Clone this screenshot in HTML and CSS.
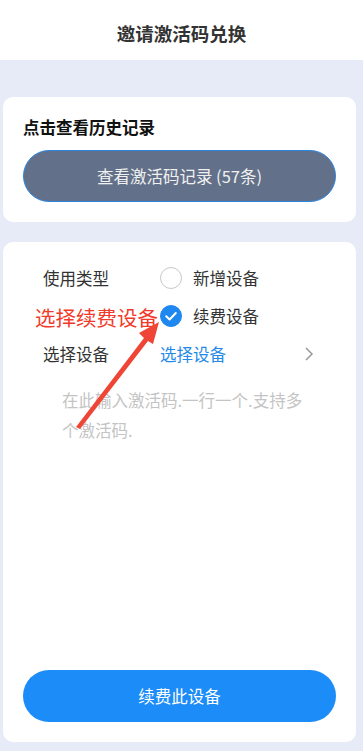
FILE: index.html
```html
<!DOCTYPE html>
<html lang="zh-CN">
<head>
  <meta charset="UTF-8">
  <meta name="viewport" content="width=device-width, initial-scale=1.0">
  <title>邀请激活码兑换</title>
  <link rel="stylesheet" href="styles.css">
</head>
<body>
  <header class="top-bar">邀请激活码兑换</header>

  <main class="page">
    <section class="card history">
      <div class="card-title">点击查看历史记录</div>
      <button class="btn btn-gray">查看激活码记录 (57条)</button>
    </section>

    <section class="card redeem">
      <div class="form">
        <div class="row">
          <div class="label">使用类型</div>
          <label class="radio">
            <span class="dot"></span>
            <span>新增设备</span>
          </label>
        </div>
        <div class="row">
          <div class="label"></div>
          <label class="radio checked">
            <span class="dot">
              <svg viewBox="0 0 22 22" width="22" height="22"><path d="M6.2 11.3 L9.6 14.5 L15.8 8" fill="none" stroke="#fff" stroke-width="2" stroke-linecap="round" stroke-linejoin="round"/></svg>
            </span>
            <span>续费设备</span>
          </label>
        </div>
        <div class="row">
          <div class="label">选择设备</div>
          <div class="link">选择设备</div>
          <svg class="chevron" viewBox="0 0 10 16" width="10" height="16"><path d="M2 2 L8 8 L2 14" fill="none" stroke="#9a9a9a" stroke-width="1.5"/></svg>
        </div>
      </div>

      <textarea class="codes" placeholder="在此输入激活码.一行一个.支持多个激活码."></textarea>

      <button class="btn btn-blue">续费此设备</button>

      <!-- 标注 -->
      <div class="note-text">选择续费设备</div>
      <svg class="note-arrow" viewBox="0 0 363 751" width="363" height="751">
        <polygon points="76,427 144,338 139,333 159,322 153,344 148,341 80,429" fill="#ef4536"/>
      </svg>
    </section>
  </main>
</body>
</html>
```

FILE: styles.css
```css
* {
  box-sizing: border-box;
}
body {
  margin: 0;
  font-family: "Noto Sans CJK SC", "Noto Sans", sans-serif;
  background-color: #e6ebf7;
  color: #333;
}
.top-bar {
  height: 60px;
  background-color: #fff;
  display: flex;
  align-items: center;
  justify-content: center;
  font-size: 18.5px;
  font-weight: 600;
  color: #333;
  padding-top: 6px;
}
.page {
  padding: 37px 7px 9px 3px;
  display: flex;
  flex-direction: column;
  gap: 20px;
}
.card {
  background-color: #fff;
  border-radius: 10px;
  padding: 19px 20px 20px;
}
.card-title {
  font-size: 16.5px;
  font-weight: bold;
  color: #111;
  line-height: 22px;
  margin-bottom: 12px;
}
.btn {
  display: block;
  width: 100%;
  height: 52px;
  border-radius: 26px;
  font-family: inherit;
  font-size: 16.5px;
  color: #f0f0f0;
  cursor: pointer;
}
.btn-gray {
  background-color: #637089;
  border: 1px solid #2b86e0;
}
.btn-blue {
  background-color: #1b8cf8;
  border: none;
  color: #fff;
}
.redeem {
  height: 500px;
  display: flex;
  flex-direction: column;
  padding-top: 17px;
  position: relative;
}
.form {
  padding: 0 20px;
}
.row {
  height: 38px;
  display: flex;
  align-items: center;
  font-size: 16.5px;
}
.label {
  width: 117px;
  color: #333;
}
.radio {
  display: flex;
  align-items: center;
  gap: 11px;
  color: #333;
}
.dot {
  width: 22px;
  height: 22px;
  border-radius: 50%;
  border: 1px solid #c8c8c8;
  display: flex;
}
.radio.checked .dot {
  background-color: #1e88f0;
  border-color: #1e88f0;
}
.radio.checked .dot svg {
  margin: -1px;
}
.link {
  flex: 1;
  color: #2589e8;
}
.chevron {
  margin-right: 2px;
}
.codes {
  flex: 1;
  margin: 12px 30px 12px 39px;
  padding: 0;
  border: none;
  resize: none;
  outline: none;
  font-family: inherit;
  font-size: 16.5px;
  line-height: 30px;
  color: #333;
}
.codes::placeholder {
  color: #c4c4c4;
}
.note-text {
  position: absolute;
  left: 32px;
  top: 61px;
  font-size: 20.5px;
  color: #f23a2b;
  line-height: 28px;
}
.note-arrow {
  position: absolute;
  left: -3px;
  top: -242px;
  pointer-events: none;
}
```
